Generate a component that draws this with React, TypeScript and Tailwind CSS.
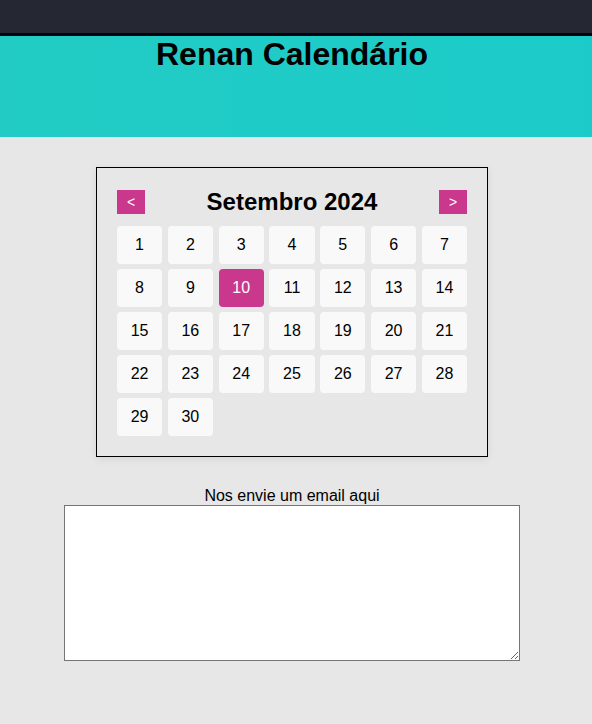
import React from 'react';

const days = Array.from({ length: 30 }, (_, i) => i + 1);

export default function App() {
  return (
    <div className="min-h-[724px] bg-[#e7e7e7] text-black" style={{ fontFamily: '"Liberation Sans", Arial, sans-serif' }}>
      <div className="h-[33px] bg-[#252833] border-b-[3px] border-[#05050f] box-content" />
      <header className="h-[101px] bg-gradient-to-r from-[#22ccc4] to-[#1ccbc9] pr-2">
        <h1 className="text-center text-[32px] font-bold leading-[37px]">Renan Calendário</h1>
      </header>

      <main className="flex flex-col items-center pr-2 pt-[30px]">
        <div className="w-[392px] border border-black p-5 pt-[22px] shadow-[0_2px_8px_rgba(0,0,0,0.08)]">
          <div className="flex items-center justify-between mb-3">
            <button className="w-7 h-6 bg-[#c9388c] text-white text-sm">&lt;</button>
            <h2 className="text-2xl font-bold leading-6">Setembro 2024</h2>
            <button className="w-7 h-6 bg-[#c9388c] text-white text-sm">&gt;</button>
          </div>
          <div className="grid grid-cols-7 gap-x-[5.7px] gap-y-[5px]">
            {days.map((d) => (
              <div
                key={d}
                className={
                  d === 10
                    ? 'h-[38px] rounded flex items-center justify-center bg-[#c9388c] text-white'
                    : 'h-[38px] rounded flex items-center justify-center bg-[#f9f9f9]'
                }
              >
                {d}
              </div>
            ))}
          </div>
        </div>

        <div className="mt-[30px] flex flex-col items-center">
          <label htmlFor="email" className="leading-[18px]">Nos envie um email aqui</label>
          <textarea id="email" className="w-[456px] h-[156px] bg-white border border-[#767676] resize" />
        </div>
      </main>
    </div>
  );
}
